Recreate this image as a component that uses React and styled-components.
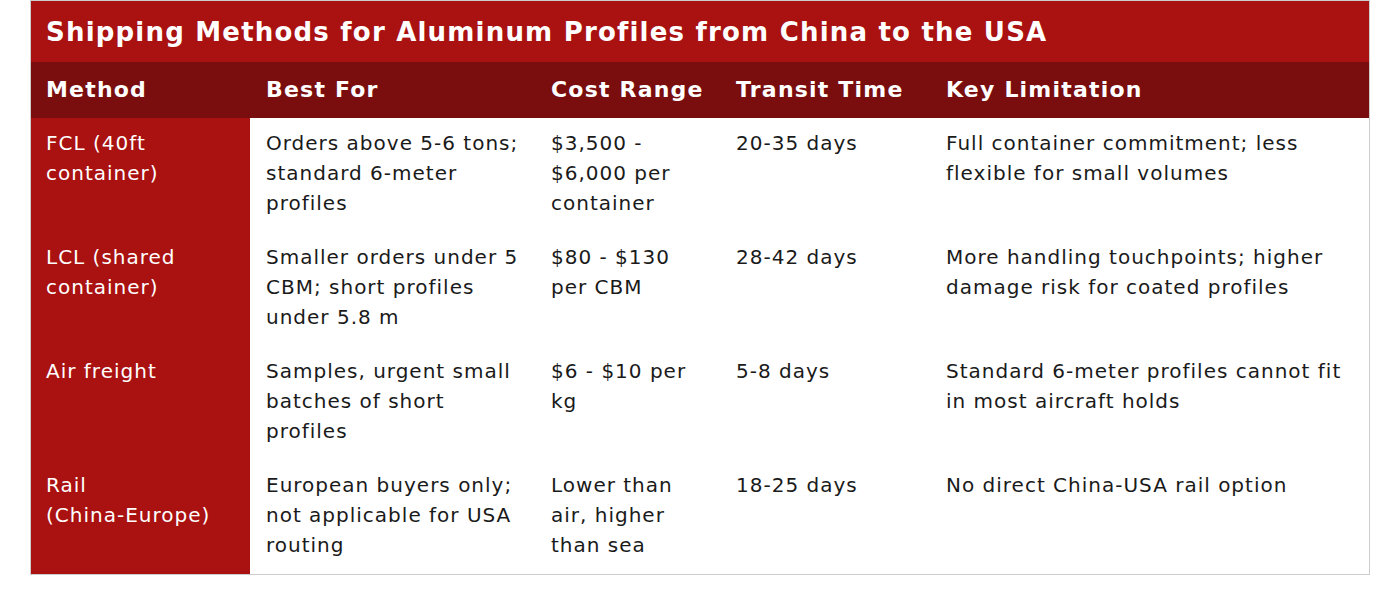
import React from 'react';
import styled, { createGlobalStyle } from 'styled-components';

const GlobalStyle = createGlobalStyle`
    body {
        margin: 0;
        background: #ffffff;
        font-family: "DejaVu Sans", Verdana, sans-serif;
    }
`;

const rows = [
    {
        method: 'FCL (40ft container)',
        best: 'Orders above 5-6 tons; standard 6-meter profiles',
        cost: '$3,500 - $6,000 per container',
        transit: '20-35 days',
        limit: 'Full container commitment; less flexible for small volumes',
    },
    {
        method: 'LCL (shared container)',
        best: 'Smaller orders under 5 CBM; short profiles under 5.8 m',
        cost: '$80 - $130 per CBM',
        transit: '28-42 days',
        limit: 'More handling touchpoints; higher damage risk for coated profiles',
    },
    {
        method: 'Air freight',
        best: 'Samples, urgent small batches of short profiles',
        cost: '$6 - $10 per kg',
        transit: '5-8 days',
        limit: 'Standard 6-meter profiles cannot fit in most aircraft holds',
    },
    {
        method: <>Rail <NoWrap>(China-Europe)</NoWrap></>,
        best: 'European buyers only; not applicable for USA routing',
        cost: 'Lower than air, higher than sea',
        transit: '18-25 days',
        limit: 'No direct China-USA rail option',
    },
];

const headers = ['Method', 'Best For', 'Cost Range', 'Transit Time', 'Key Limitation'];

export default function App() {
    return (
        <>
            <GlobalStyle />
            <Page>
                <Table>
                    <Title>Shipping Methods for Aluminum Profiles from China to the USA</Title>
                    <Grid>
                        {headers.map((h) => (
                            <HeadCell key={h}>{h}</HeadCell>
                        ))}
                        {rows.map((r, i) => (
                            <React.Fragment key={i}>
                                <Cell $first>{r.method}</Cell>
                                <Cell>{r.best}</Cell>
                                <Cell>{r.cost}</Cell>
                                <Cell>{r.transit}</Cell>
                                <Cell>{r.limit}</Cell>
                            </React.Fragment>
                        ))}
                    </Grid>
                </Table>
            </Page>
        </>
    );
}

function NoWrap({ children }) {
    return <Keep>{children}</Keep>;
}

const Keep = styled.span`
    white-space: nowrap;
`;

const Page = styled.div`
    padding: 0 30px;
`;

const Table = styled.div`
    width: 1340px;
    border: 1px solid #cccccc;
    box-sizing: border-box;
`;

const Title = styled.div`
    height: 61px;
    display: flex;
    align-items: center;
    padding: 1px 15px 0;
    box-sizing: border-box;
    background: #aa1111;
    color: #ffffff;
    font-size: 26px;
    font-weight: bold;
    letter-spacing: 1.2px;
`;

const Grid = styled.div`
    display: grid;
    grid-template-columns: 219px 285px 185px 210px 1fr;
`;

const HeadCell = styled.div`
    height: 56px;
    box-sizing: border-box;
    display: flex;
    align-items: center;
    padding: 0 15px 2px 16px;
    background: #7a0d0d;
    color: #ffffff;
    font-size: 22px;
    font-weight: bold;
    letter-spacing: 1.2px;
    &:first-child {
        padding-left: 15px;
    }
`;

const Cell = styled.div`
    padding: 10px 15px 14px ${(p) => (p.$first ? '15px' : '16px')};
    font-size: 20px;
    line-height: 30px;
    letter-spacing: 1px;
    color: ${(p) => (p.$first ? '#ffffff' : '#1a1a1a')};
    background: ${(p) => (p.$first ? '#aa1111' : '#ffffff')};
`;
